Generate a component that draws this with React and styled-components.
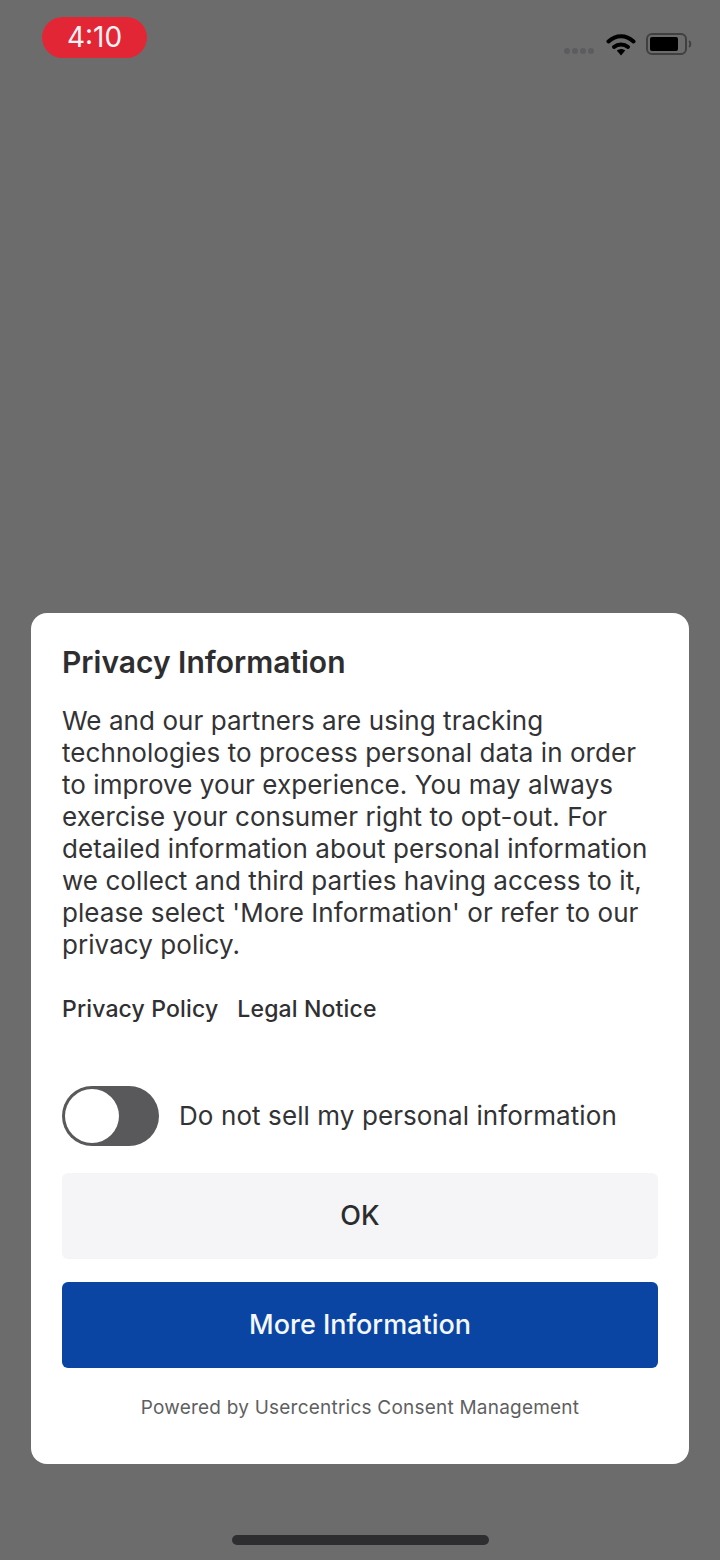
import React from 'react';
import styled, { createGlobalStyle } from 'styled-components';

const Global = createGlobalStyle`
  html, body {
    margin: 0;
    padding: 0;
    background: #6d6c6d;
  }
  * {
    box-sizing: border-box;
  }
`;

const Screen = styled.div`
  width: 720px;
  height: 1560px;
  background: #6d6c6d;
  display: flex;
  flex-direction: column;
  font-family: Inter, "Liberation Sans", sans-serif;
  color: #303030;
  overflow: hidden;
`;

const StatusBar = styled.div`
  height: 613px;
  padding: 17px 28px 0 42px;
  display: flex;
  justify-content: space-between;
  align-items: flex-start;
`;

const TimePill = styled.div`
  width: 105px;
  height: 41px;
  border-radius: 21px;
  background: #e32636;
  color: #f6f3f4;
  font-size: 28px;
  line-height: 41px;
  text-align: center;
`;

const StatusIcons = styled.div`
  display: flex;
  align-items: center;
  margin-top: 15px;
`;

const Card = styled.div`
  width: 658px;
  height: 851px;
  margin-left: 31px;
  padding: 31px 31px 0;
  border-radius: 16px;
  background: #fff;
  display: flex;
  flex-direction: column;
`;

const Title = styled.h1`
  margin: 0 0 25px;
  font-size: 30px;
  line-height: 36px;
  font-weight: 600;
  color: #2e2e30;
`;

const Body = styled.p`
  margin: 0;
  font-size: 26px;
  line-height: 32px;
  font-weight: 400;
  letter-spacing: 0.06px;
  color: #333335;
`;

const Links = styled.div`
  display: flex;
  gap: 19px;
  margin-top: 32px;
`;

const LinkText = styled.span`
  font-size: 23px;
  line-height: 32px;
  font-weight: 500;
  letter-spacing: 0.15px;
  color: #303032;
`;

const ToggleRow = styled.div`
  display: flex;
  align-items: center;
  gap: 20px;
  margin-top: 61px;
`;

const Track = styled.div`
  width: 97px;
  height: 60px;
  border-radius: 30px;
  background: #59585b;
  padding: 3px;
  flex-shrink: 0;
`;

const Knob = styled.div`
  width: 54px;
  height: 54px;
  border-radius: 50%;
  background: #fff;
`;

const ToggleLabel = styled.span`
  font-size: 26px;
  line-height: 32px;
  letter-spacing: 0.09px;
  color: #333335;
`;

const Button = styled.div`
  height: 86px;
  padding-bottom: 2px;
  border-radius: 6px;
  display: flex;
  align-items: center;
  justify-content: center;
  font-size: 27px;
  font-weight: 500;
  background: ${(p) => (p.$primary ? '#0b45a3' : '#f5f4f7')};
  color: ${(p) => (p.$primary ? '#f4f8fd' : '#2c2c2e')};
  margin-top: ${(p) => (p.$primary ? '23px' : '27px')};
`;

const Footer = styled.div`
  margin-top: 26px;
  text-align: center;
  font-size: 19px;
  line-height: 28px;
  letter-spacing: 0.22px;
  color: #5f5f62;
`;

const HomeArea = styled.div`
  flex: 1;
  display: flex;
  justify-content: center;
  padding-top: 71px;
`;

const HomeBar = styled.div`
  width: 257px;
  height: 10px;
  border-radius: 5px;
  background: #2e2d30;
`;

const SignalDots = () => (
  <svg width="34" height="8" viewBox="0 0 34 8" style={{ marginTop: 14, marginRight: 9 }}>
    {[4, 12, 20, 28].map((x) => (
      <circle key={x} cx={x} cy="4" r="3" fill="#5c5b5e" />
    ))}
  </svg>
);

const Wifi = () => (
  <svg width="30" height="24" viewBox="0 0 30 24" style={{ marginRight: 10 }}>
    <path d="M2.5 9.5C10 2.5 20 2.5 27.5 9.5" fill="none" stroke="#000" strokeWidth="4" strokeLinecap="round" />
    <path d="M8 15C12 11.5 18 11.5 22 15" fill="none" stroke="#000" strokeWidth="4" strokeLinecap="round" />
    <path d="M10.8 18.6C13.4 16.6 16.6 16.6 19.2 18.6L15 23.5Z" fill="#000" />
  </svg>
);

const Battery = () => (
  <svg width="46" height="22" viewBox="0 0 46 22">
    <rect x="1" y="1" width="39" height="20" rx="5" fill="none" stroke="#403f41" strokeWidth="2" />
    <rect x="4" y="4" width="28" height="14" rx="2" fill="#000" />
    <path d="M43 8C44.8 9 44.8 13 43 14" fill="none" stroke="#403f41" strokeWidth="2" />
  </svg>
);

const App = () => {
  return (
    <>
      <Global />
      <Screen>
        <StatusBar>
          <TimePill>4:10</TimePill>
          <StatusIcons>
            <SignalDots />
            <Wifi />
            <Battery />
          </StatusIcons>
        </StatusBar>
        <Card>
          <Title>Privacy Information</Title>
          <Body>
            We and our partners are using tracking
            <br />
            technologies to process personal data in order
            <br />
            to improve your experience. You may always
            <br />
            exercise your consumer right to opt-out. For
            <br />
            detailed information about personal information
            <br />
            we collect and third parties having access to it,
            <br />
            please select 'More Information' or refer to our
            <br />
            privacy policy.
          </Body>
          <Links>
            <LinkText>Privacy Policy</LinkText>
            <LinkText>Legal Notice</LinkText>
          </Links>
          <ToggleRow>
            <Track>
              <Knob />
            </Track>
            <ToggleLabel>Do not sell my personal information</ToggleLabel>
          </ToggleRow>
          <Button>OK</Button>
          <Button $primary>More Information</Button>
          <Footer>Powered by Usercentrics Consent Management</Footer>
        </Card>
        <HomeArea>
          <HomeBar />
        </HomeArea>
      </Screen>
    </>
  );
};

export default App;
